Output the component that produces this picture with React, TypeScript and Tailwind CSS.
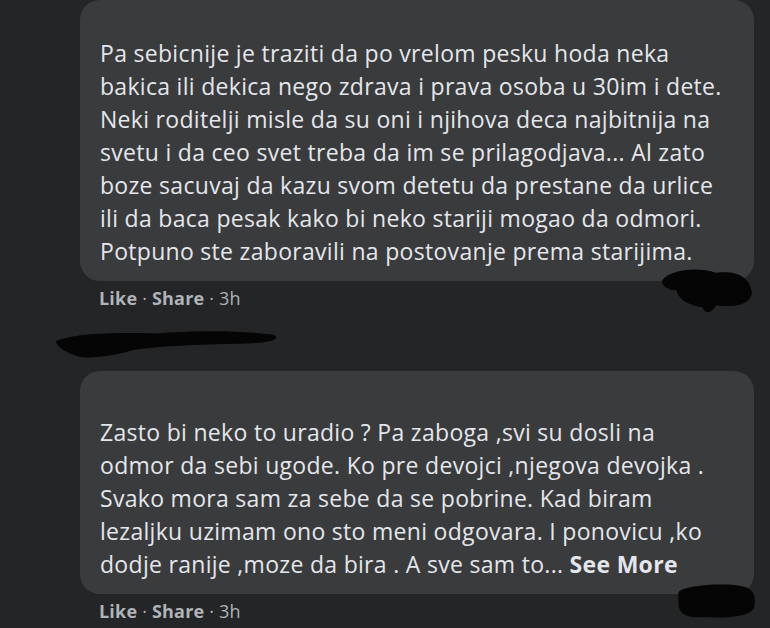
import React from "react";

const first = [
  "Pa sebicnije je traziti da po vrelom pesku hoda neka",
  "bakica ili dekica nego zdrava i prava osoba u 30im i dete.",
  "Neki roditelji misle da su oni i njihova deca najbitnija na",
  "svetu i da ceo svet treba da im se prilagodjava... Al zato",
  "boze sacuvaj da kazu svom detetu da prestane da urlice",
  "ili da baca pesak kako bi neko stariji mogao da odmori.",
  "Potpuno ste zaboravili na postovanje prema starijima.",
];

const second = [
  "Zasto bi neko to uradio ? Pa zaboga ,svi su dosli na",
  "odmor da sebi ugode. Ko pre devojci ,njegova devojka .",
  "Svako mora sam za sebe da se pobrine. Kad biram",
  "lezaljku uzimam ono sto meni odgovara. I ponovicu ,ko",
];

function Actions() {
  return (
    <div className="pl-[19px] mt-[5px] text-[18px] leading-[24px] tracking-[0.2px] text-[#b0b3b8]">
      <span className="font-bold">Like</span>
      <span> · </span>
      <span className="font-bold">Share</span>
      <span> · 3h</span>
    </div>
  );
}

function Scribble({ className, d }: { className: string; d: string }) {
  return (
    <svg className={className} viewBox="0 0 100 50" preserveAspectRatio="none">
      <path d={d} fill="#050505" />
    </svg>
  );
}

export default function App() {
  return (
    <div
      className="relative w-[770px] h-[628px] overflow-hidden bg-[#242526] text-[#e4e6eb]"
      style={{ fontFamily: '"Open Sans", "Liberation Sans", sans-serif' }}
    >
      <div className="pl-[80px] pr-[16px]">
        <div className="rounded-[20px] bg-[#3a3b3c] pl-[20px] pr-[12px] pt-[37px] pb-[13px] text-[23px] leading-[33px] tracking-[0.3px]">
          {first.map((l) => (
            <div key={l} className="whitespace-nowrap">{l}</div>
          ))}
        </div>
        <Actions />

        <div className="mt-[61px] rounded-[20px] bg-[#3a3b3c] pl-[20px] pr-[12px] pt-[45px] pb-[13px] text-[23px] leading-[33px] tracking-[0.3px]">
          {second.map((l) => (
            <div key={l} className="whitespace-nowrap">{l}</div>
          ))}
          <div className="whitespace-nowrap">
            dodje ranije ,moze da bira . A sve sam to...{" "}
            <span className="font-bold">See More</span>
          </div>
        </div>
        <Actions />
      </div>

      <Scribble
        className="absolute left-[56px] top-[327px] w-[222px] h-[32px]"
        d="M0 22 C8 10 25 8 45 10 C60 6 80 4 98 12 C102 20 96 26 80 26 C60 28 45 30 35 36 C25 46 15 50 10 46 C4 40 0 30 0 22 Z"
      />
      <Scribble
        className="absolute left-[662px] top-[267px] w-[90px] h-[48px]"
        d="M0 14 C10 2 40 0 60 6 C80 4 98 8 100 28 C96 40 80 42 60 40 C55 48 48 50 45 42 C30 40 18 34 16 24 C6 24 0 20 0 14 Z"
      />
      <Scribble
        className="absolute left-[677px] top-[583px] w-[80px] h-[37px]"
        d="M4 10 C20 2 60 0 80 4 C96 6 100 20 96 34 C90 46 60 48 30 46 C10 48 2 40 2 28 C2 18 0 14 4 10 Z"
      />
    </div>
  );
}
